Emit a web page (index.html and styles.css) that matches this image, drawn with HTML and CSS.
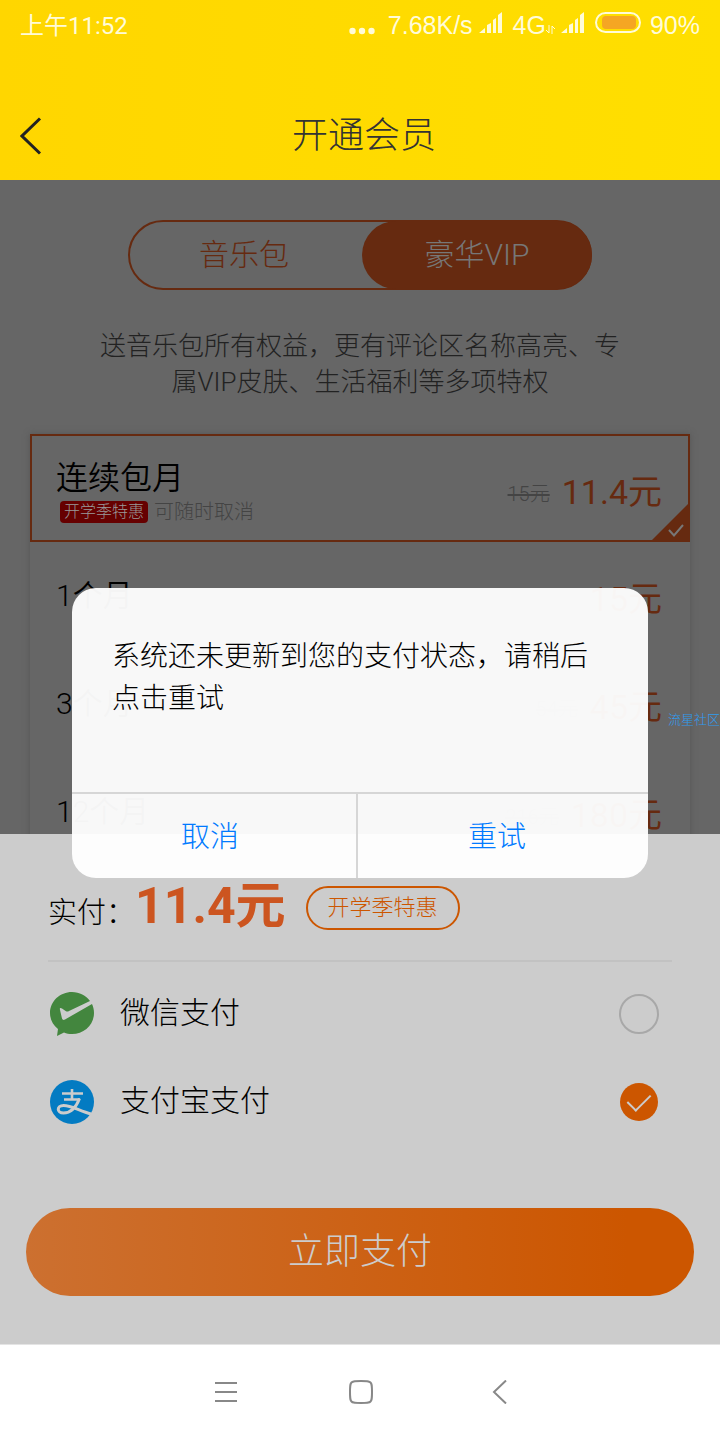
FILE: index.html
```html
<!DOCTYPE html>
<html lang="zh-CN">
<head>
<meta charset="utf-8">
<meta name="viewport" content="width=device-width, initial-scale=1">
<title>开通会员</title>
<link rel="stylesheet" href="styles.css">
</head>
<body>
<div class="app">
  <header class="top">
    <div class="status">
      <span class="status-time">上午11:52</span>
      <svg class="dots" width="26" height="8" viewBox="0 0 26 8"><circle cx="3.5" cy="4" r="3.2"/><circle cx="13" cy="4" r="3.2"/><circle cx="22.500" cy="4" r="3.2"/></svg>
      <span>7.68K/s</span>
      <svg class="signal" width="24" height="22" viewBox="0 0 24 22"><path d="M0 21 L6 16 V21Z M8 13 L12 11 V21 H8Z M14 8 L17 6 V21 H14Z M19 3 L23 0 V21 H19Z"/></svg>
      <span>4G</span>
      <svg class="arrows" width="9" height="9" viewBox="0 0 9 9"><path d="M3 0V8L0 5M6 9V1L9 4"/></svg>
      <svg class="signal" width="24" height="22" viewBox="0 0 24 22"><path d="M0 21 L6 16 V21Z M8 13 L12 11 V21 H8Z M14 8 L17 6 V21 H14Z M19 3 L23 0 V21 H19Z"/></svg>
      <svg class="battery" width="46" height="22" viewBox="0 0 46 22"><rect x="1" y="1" width="44" height="19" rx="9.5" fill="none" stroke="#fffbd8" stroke-width="2"/><rect x="7" y="4" width="34" height="13" rx="4" fill="#f5a623"/></svg>
      <span>90%</span>
    </div>
    <div class="titlebar">
      <button class="back" aria-label="返回"><svg width="22" height="38" viewBox="0 0 22 38"><path d="M20 1.500 L2 19 L20 36.500"/></svg></button>
      <h1 class="title">开通会员</h1>
    </div>
  </header>

  <main class="content">
    <section class="offers">
      <div class="tabs">
        <button class="tab">音乐包</button>
        <button class="tab tab-active">豪华VIP</button>
      </div>
      <p class="desc">送音乐包所有权益，更有评论区名称高亮、专属VIP皮肤、生活福利等多项特权</p>
      <div class="plans">
        <label class="plan plan-selected">
          <input class="hidden-radio" type="radio" name="plan" checked>
          <span class="plan-info">
            <span class="plan-name plan-name-large">连续包月</span>
            <span class="plan-note"><span class="tag">开学季特惠</span>可随时取消</span>
          </span>
          <s class="old-price">15元</s>
          <span class="price">11.4元</span>
          <svg class="corner" width="40" height="40" viewBox="0 0 40 40"><path d="M40 0V40H0Z" fill="#662a10"/><path d="M19 28L24 33.500L33 23" fill="none" stroke="#777" stroke-width="2"/></svg>
        </label>
        <label class="plan">
          <input class="hidden-radio" type="radio" name="plan">
          <span class="plan-info"><span class="plan-name">1个月</span></span>
          <span class="price">15元</span>
        </label>
        <label class="plan">
          <input class="hidden-radio" type="radio" name="plan">
          <span class="plan-info"><span class="plan-name">3个月</span></span>
          <s class="old-price">54元</s>
          <span class="price">45元</span>
        </label>
        <label class="plan">
          <input class="hidden-radio" type="radio" name="plan">
          <span class="plan-info"><span class="plan-name">12个月</span></span>
          <s class="old-price">216元</s>
          <span class="price">180元</span>
        </label>
      </div>
    </section>

    <section class="checkout">
      <div class="total">
        <span>实付：</span><strong class="total-price">11.4元</strong>
        <span class="promo">开学季特惠</span>
      </div>
      <div class="methods">
        <label class="method">
          <svg width="44" height="44" viewBox="0 0 44 44"><path d="M22 0C10 0 0 9.300 0 21C0 27.500 3 33 8 37L7 44L14 40.500C16.500 41.500 19 42 22 42C34 42 44 33 44 21C44 17.500 43.200 14.500 42 12L15 27.500C13.500 28.300 12.700 28 12 26.500L9.800 17C9.800 15.500 11 15.800 12 16.500L16 19.200C17 19.800 18 19.600 19 19L40 9C36 3.500 29.500 0 22 0Z" fill="#43863e"/></svg>
          <span class="method-name">微信支付</span>
          <input class="radio" type="radio" name="method">
        </label>
        <label class="method">
          <svg width="44" height="44" viewBox="0 0 44 44"><circle cx="22" cy="22" r="22" fill="#037bc2"/><g fill="none" stroke="#ccc"><path d="M12 13.500H33M22 9V18.500M14 19.500H30" stroke-width="2.600"/><path d="M29.500 18.500C27 25 22 33 13.500 33C6.500 33 6.500 25.500 13.500 25.500C21 25.500 29 30.500 41 34" stroke-width="3"/></g></svg>
          <span class="method-name">支付宝支付</span>
          <input class="radio" type="radio" name="method" checked>
        </label>
      </div>
      <button class="pay">立即支付</button>
    </section>

    <div class="dialog" role="dialog" aria-describedby="dialog-message">
      <p class="dialog-message" id="dialog-message">系统还未更新到您的支付状态，请稍后点击重试</p>
      <div class="dialog-actions">
        <button class="dialog-button">取消</button>
        <button class="dialog-button dialog-retry">重试</button>
      </div>
    </div>
    <span class="watermark">流星社区</span>
  </main>

  <nav class="system-nav">
    <button class="nav-button" aria-label="菜单"><svg width="24" height="24" viewBox="0 0 24 24"><path d="M2 3H24M2 12H24M2 21H24"/></svg></button>
    <button class="nav-button" aria-label="主页"><svg width="24" height="24" viewBox="0 0 24 24"><path d="M12 1C20 1 20.500 1.500 21.500 2.500C22.500 3.500 23 4 23 12S22.500 20.500 21.500 21.500C20.500 22.500 20 23 12 23S3.500 22.500 2.500 21.500C1.500 20.500 1 20 1 12S1.500 3.500 2.500 2.500C3.500 1.500 4 1 12 1Z"/></svg></button>
    <button class="nav-button" aria-label="返回"><svg width="24" height="24" viewBox="0 0 24 24"><path d="M21 0.500L9 12L21 23.500"/></svg></button>
  </nav>
</div>
</body>
</html>
```
FILE: styles.css
```css
* {
  box-sizing: border-box;
}

body {
  margin: 0;
  font-family: Roboto, "Noto Sans CJK SC", sans-serif;
  font-weight: 300;
  color: #000;
}

button {
  border: 0;
  padding: 0;
  background: none;
  color: inherit;
  font: inherit;
}

svg {
  display: block;
  flex: none;
}

.app {
  display: flex;
  flex-direction: column;
  height: 100vh;
  background: #fff;
}

.top {
  flex: none;
  height: 180px;
  background: linear-gradient(90deg, #ffd600, #ffdf00);
}

.status {
  display: flex;
  align-items: center;
  height: 50px;
  padding: 0 20px;
  color: #fffbd8;
  font-family: "Liberation Sans", sans-serif;
  font-size: 25px;
  font-weight: 400;
}

.status-time {
  margin-right: auto;
  padding-bottom: 4px;
  font-family: Roboto, "Noto Sans CJK SC", sans-serif;
  font-size: 24px;
}

.dots {
  margin: 12px 13px 0 0;
  fill: #fffbd8;
}

.signal {
  margin: 0 10px 4px 6px;
  fill: #fffbd8;
}

.arrows {
  margin-top: 8px;
  fill: none;
  stroke: #fffbd8;
}

.battery {
  margin: 0 9px 4px 0;
}

.titlebar {
  display: grid;
  grid-template-columns: 68px 1fr 60px;
  align-items: center;
  height: 130px;
  padding-top: 42px;
}

.back {
  justify-self: start;
  padding-left: 20px;
}

.back svg {
  fill: none;
  stroke: #222;
  stroke-width: 3;
}

.title {
  margin: 0;
  color: #333;
  font-size: 36px;
  font-weight: 300;
  line-height: 44px;
  text-align: center;
}

.content {
  position: relative;
  display: flex;
  flex: 1;
  flex-direction: column;
  min-height: 0;
}

.offers {
  flex: 1;
  min-height: 0;
  overflow: hidden;
  padding: 40px 30px 0;
  background: #666;
}

.tabs {
  display: flex;
  height: 70px;
  margin: 0 98px;
  border: 2px solid #662a10;
  border-radius: 35px;
  background: #666;
  color: #662a10;
  font-size: 30px;
}

.tab {
  flex: 1;
  padding: 0 4px 6px 0;
}

.tab-active {
  flex: none;
  width: 50%;
  margin: -1px -2px -1px 0;
  padding: 0 0 6px;
  border-radius: 34px;
  background: #662a10;
  color: #777;
}

.desc {
  margin: 38px 70px 34px;
  color: #222;
  font-size: 26px;
  line-height: 36px;
  text-align: center;
}

.plans {
  box-shadow: 0 0 6px #555;
}

.plan {
  position: relative;
  display: flex;
  align-items: center;
  height: 108px;
  padding: 0 28px 0 26px;
}

.plan-selected {
  padding: 2px 26px 0 24px;
  border: 2px solid #662a10;
}

.hidden-radio {
  position: absolute;
  opacity: 0;
}

.plan-info {
  display: flex;
  flex: 1;
  flex-direction: column;
}

.plan-name {
  font-size: 30px;
  font-weight: 350;
  line-height: 44px;
}

.plan-name-large {
  padding-top: 2px;
  font-size: 32px;
}

.plan-note {
  display: flex;
  align-items: center;
  gap: 6px;
  color: #444;
  font-size: 20px;
  line-height: 24px;
}

.tag {
  margin-left: 4px;
  padding: 0 4px;
  border-radius: 4px;
  background: #660000;
  color: #999;
  font-size: 16px;
  line-height: 22px;
}

.old-price {
  padding-top: 6px;
  margin-right: 12px;
  color: #444;
  font-size: 20px;
}

.price {
  color: #662a10;
  font-size: 34px;
  font-weight: 400;
}

.corner {
  position: absolute;
  right: -2px;
  bottom: -2px;
}

.checkout {
  flex: none;
  padding: 44px 0 48px;
  background: #ccc;
}

.total {
  display: flex;
  align-items: baseline;
  height: 84px;
  margin: 0 48px;
  padding-bottom: 22px;
  border-bottom: 2px solid #c2c2c2;
  font-size: 29px;
  line-height: 56px;
}

.total-price {
  color: #cc5520;
  font-size: 50px;
  font-weight: 700;
}

.promo {
  align-self: center;
  margin-left: 20px;
  padding: 0 20px;
  border: 2px solid #cc5600;
  border-radius: 22px;
  color: #cc5600;
  font-size: 22px;
  line-height: 40px;
}

.methods {
  padding: 8px 61px 62px 50px;
}

.method {
  display: flex;
  align-items: center;
  height: 88px;
  font-size: 30px;
}

.method-name {
  flex: 1;
  padding: 0 0 8px 26px;
}

.radio {
  width: 40px;
  height: 40px;
  margin: 0;
  border: 2px solid #a8a8a8;
  border-radius: 50%;
  appearance: none;
}

.radio:checked {
  display: grid;
  place-items: center;
  border: 1px solid transparent;
  background: #cc5600;
  background-clip: padding-box;
}

.radio:checked::after {
  width: 20px;
  height: 11px;
  margin-bottom: 6px;
  border: solid #ccc;
  border-width: 0 0 2px 2px;
  content: "";
  transform: rotate(-45deg);
}

.pay {
  display: block;
  width: calc(100% - 52px);
  height: 88px;
  margin: 0 26px;
  padding-bottom: 8px;
  border-radius: 44px;
  background: linear-gradient(90deg, #cc7030, #cc5600 90%);
  color: #ccc;
  font-size: 36px;
}

.dialog {
  position: absolute;
  top: 408px;
  right: 10%;
  left: 10%;
  overflow: hidden;
  border-radius: 24px;
  background: rgba(255, 255, 255, 0.955);
}

.dialog-message {
  min-height: 204px;
  margin: 0;
  padding: 48px 40px;
  font-size: 28px;
  line-height: 42px;
}

.dialog-actions {
  display: flex;
  border-top: 2px solid #d6d6d6;
}

.dialog-button {
  flex: 1;
  height: 84px;
  padding: 0 8px 4px 0;
  color: #007aff;
  font-size: 29px;
}

.dialog-retry {
  flex: none;
  width: 292px;
  border-left: 2px solid #d6d6d6;
  padding-right: 12px;
}

.watermark {
  position: absolute;
  top: 530px;
  right: 0;
  color: #2f9cf0;
  font-size: 13px;
  line-height: 20px;
}

.system-nav {
  display: flex;
  flex: none;
  align-items: center;
  justify-content: center;
  gap: 112px;
  height: 96px;
  padding: 0 0 2px 2px;
  border-top: 1px solid #e4e4e4;
}

.nav-button svg {
  fill: none;
  stroke: #888;
  stroke-width: 2;
}
```
